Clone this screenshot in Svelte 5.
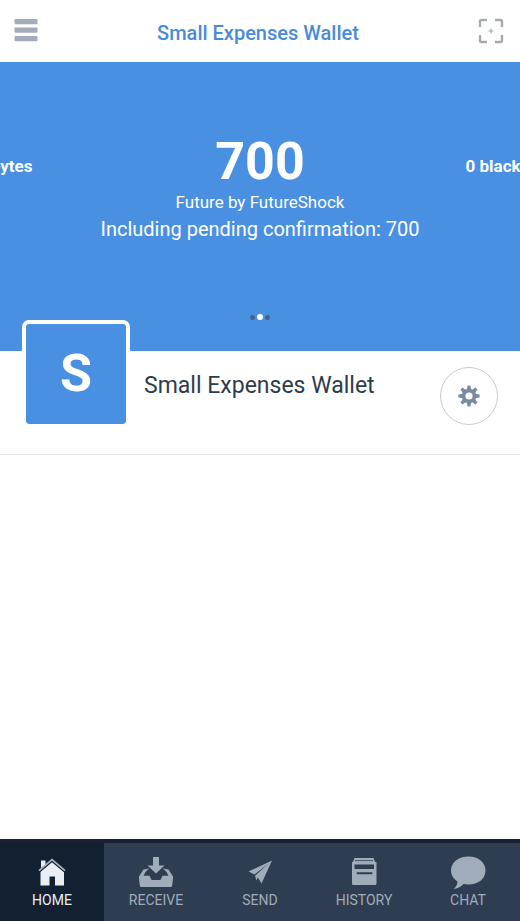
<script lang="ts">
    const wallet = 'Small Expenses Wallet';

    const tabs = [
        { id: 'home', label: 'HOME' },
        { id: 'receive', label: 'RECEIVE' },
        { id: 'send', label: 'SEND' },
        { id: 'history', label: 'HISTORY' },
        { id: 'chat', label: 'CHAT' }
    ];

    let activeTab = $state('home');
    let slide = $state(1);
</script>

<div class="app">
    <header>
        <button class="icon_button" aria-label="Menu">
            <svg width="24" height="24" viewBox="0 0 24 24" fill="#a3acba">
                <rect x="0.5" y="0" width="23" height="5.2" rx="1" />
                <rect x="0.5" y="8.5" width="23" height="5.2" rx="1" />
                <rect x="0.5" y="17" width="23" height="5.2" rx="1" />
            </svg>
        </button>
        <h1>{wallet}</h1>
        <button class="icon_button" aria-label="Scan">
            <svg width="26" height="26" viewBox="0 0 26 26" fill="none" stroke="#a5abb3" stroke-width="2.4">
                <path d="M2 9V3.5Q2 2 3.5 2H9M17 2h5.5Q24 2 24 3.5V9M24 17v5.5Q24 24 22.5 24H17M9 24H3.5Q2 24 2 22.5V17" />
                <path d="M13 10.5v5M10.5 13h5" stroke-width="1.2" />
            </svg>
        </button>
    </header>

    <section class="balances">
        <div class="slides">
            <div class="side left">0 bytes</div>
            <div class="balance">
                <strong>700</strong>
                <div class="asset">Future by FutureShock</div>
                <div class="pending">Including pending confirmation: 700</div>
            </div>
            <div class="side right">0 blackbytes</div>
        </div>
        <div class="dots">
            {#each [0, 1, 2] as i}
                <button class:current={slide === i} aria-label="Balance {i + 1}" onclick={() => (slide = i)}></button>
            {/each}
        </div>
    </section>

    <section class="wallet">
        <div class="avatar">S</div>
        <h2>{wallet}</h2>
        <button class="settings" aria-label="Wallet settings">
            <svg width="22" height="22" viewBox="-11 -11 22 22">
                <g fill="#7a8ba1">
                    {#each [0, 45, 90, 135] as angle}
                        <path d="M-2.2 -6L-1.5 -10.6H1.5L2.2 -6V6L1.5 10.6H-1.5L-2.2 6Z" transform="rotate({angle})" />
                    {/each}
                    <circle r="7.3" />
                </g>
                <circle r="3.6" fill="#fff" />
            </svg>
        </button>
    </section>

    <main></main>

    <nav>
        {#each tabs as tab}
            <button class="tab" class:active={activeTab === tab.id} onclick={() => (activeTab = tab.id)}>
                <svg width="36" height="34" viewBox="0 0 36 34" fill="currentColor">
                    {#if tab.id === 'home'}
                        <path d="M7 4.5H11.5V9L7 13Z" />
                        <path d="M18 6L30 15.5V29.5H21V20.5H15.5V29.5H6.5V15.5Z" />
                        <path d="M5 15.5L18 4.6L31 15.5" fill="none" stroke="#122031" stroke-width="2.4" />
                        <path d="M5 14.6L18 3.6L31 14.6" fill="none" stroke="#aab3be" stroke-width="1.8" />
                    {:else if tab.id === 'receive'}
                        <path d="M15 1H21V9.5H26.5L18 17.5L9.5 9.5H15Z" />
                        <path d="M5.5 13.5L11 12.5L7.5 16L5.5 19.8H11.5L13.5 24H22.5L24.5 19.8H30.5L28.5 16L25 12.5L30.5 13.5L35 20.5V23L34.2 29.5Q34 31 32.5 31H3.5Q2 31 1.8 29.5L1 23V20.5Z" />
                    {:else if tab.id === 'send'}
                        <path d="M30 4.5L6.5 15.5L12.5 18.5L26.5 7.5L15 20L19.5 27.5Z" />
                        <path d="M13 19.8L26.5 7.5L15.5 22L14.5 24.5Z" />
                    {:else if tab.id === 'history'}
                        <path d="M8.5 2H27.5L29.5 7H6.5Z" />
                        <path fill-rule="evenodd" d="M6 6H30.5V27.5Q30.5 29 29 29H7.5Q6 29 6 27.5ZM8.5 8.5V13H28V8.5Z" />
                        <path d="M9 4.6H27" stroke="#2e3d51" stroke-width="0.8" />
                        <path d="M11.5 17.3H25.5" stroke="#2e3d51" stroke-width="2" stroke-linecap="round" />
                    {:else}
                        <path d="M18.5 0.5C28.5 0.5 35.5 6.5 35.5 14.5C35.5 23 28 28.5 18.5 28.5C16.8 28.5 15 28.3 13.5 28C11 31 7 32.8 3.5 33C5.8 31 7.5 28.5 7.5 25.5C3.2 22.7 1 19 1 14.5C1 6.5 8.5 0.5 18.5 0.5Z" />
                    {/if}
                </svg>
                <span>{tab.label}</span>
            </button>
        {/each}
    </nav>
</div>

<style>
    :global(body) {
        background: #fff;
    }

    .app {
        min-height: 100vh;
        display: flex;
        flex-direction: column;
        overflow-x: hidden;
        font-family: Roboto, "Liberation Sans", sans-serif;
    }

    button {
        padding: 0;
        border: none;
        background: none;
        font-family: inherit;
        cursor: pointer;
    }

    h1, h2 {
        margin: 0;
    }

    svg {
        display: block;
    }

    header {
        height: 62px;
        box-sizing: border-box;
        padding: 0 16px 0 14px;
        display: flex;
        align-items: center;
        justify-content: space-between;
    }

    header h1 {
        padding-top: 4px;
        color: #4a8bd8;
        font-size: 20px;
        line-height: 24px;
        font-weight: 500;
    }

    .balances {
        height: 289px;
        box-sizing: border-box;
        padding: 72px 0 31px;
        display: flex;
        flex-direction: column;
        justify-content: space-between;
        background: #4a90e2;
        color: #fff;
    }

    .slides {
        display: grid;
        grid-template-columns: minmax(0, 1fr) auto minmax(0, 1fr);
    }

    .side {
        display: flex;
        padding-top: 18px;
        font-size: 17px;
        line-height: 28px;
        font-weight: 700;
        white-space: nowrap;
        overflow: hidden;
    }

    .left {
        justify-content: flex-end;
        padding-right: 68px;
    }

    .right {
        padding-left: 46px;
    }

    .balance {
        text-align: center;
        white-space: nowrap;
    }

    .balance strong {
        display: block;
        font-size: 52px;
        line-height: 56px;
    }

    .asset {
        font-size: 17px;
        line-height: 24px;
    }

    .pending {
        font-size: 20px;
        line-height: 30px;
    }

    .dots {
        display: flex;
        align-items: center;
        justify-content: center;
        gap: 2px;
    }

    .dots button {
        width: 5px;
        height: 5px;
        border-radius: 50%;
        background: #46618a;
    }

    .dots .current {
        width: 6px;
        height: 6px;
        background: #fff;
    }

    .wallet {
        display: flex;
        align-items: flex-start;
        padding: 0 22px 26px;
        border-bottom: 1px solid #e4e4e4;
    }

    .avatar {
        width: 100px;
        height: 100px;
        margin-top: -31px;
        border: 4px solid #fff;
        border-radius: 7px;
        background: #4a90e2;
        background-clip: padding-box;
        color: #fff;
        font-size: 52px;
        line-height: 100px;
        font-weight: 700;
        text-align: center;
    }

    .wallet h2 {
        flex: 1;
        padding: 21px 0 0 14px;
        color: #2f3b4b;
        font-size: 23px;
        line-height: 28px;
        font-weight: 400;
    }

    .settings {
        width: 58px;
        height: 58px;
        margin-top: 16px;
        display: flex;
        align-items: center;
        justify-content: center;
        border: 1px solid #ccc;
        border-radius: 50%;
    }

    main {
        flex: 1;
    }

    nav {
        display: flex;
        background: #2e3d51;
        border-top: 4px solid #172335;
    }

    .tab {
        flex: 1;
        height: 78px;
        padding-top: 13px;
        display: flex;
        flex-direction: column;
        align-items: center;
        color: #a1acbb;
    }

    .tab span {
        font-size: 14px;
        line-height: 20px;
    }

    .active {
        background: #122031;
        color: #e9eef5;
    }
</style>
